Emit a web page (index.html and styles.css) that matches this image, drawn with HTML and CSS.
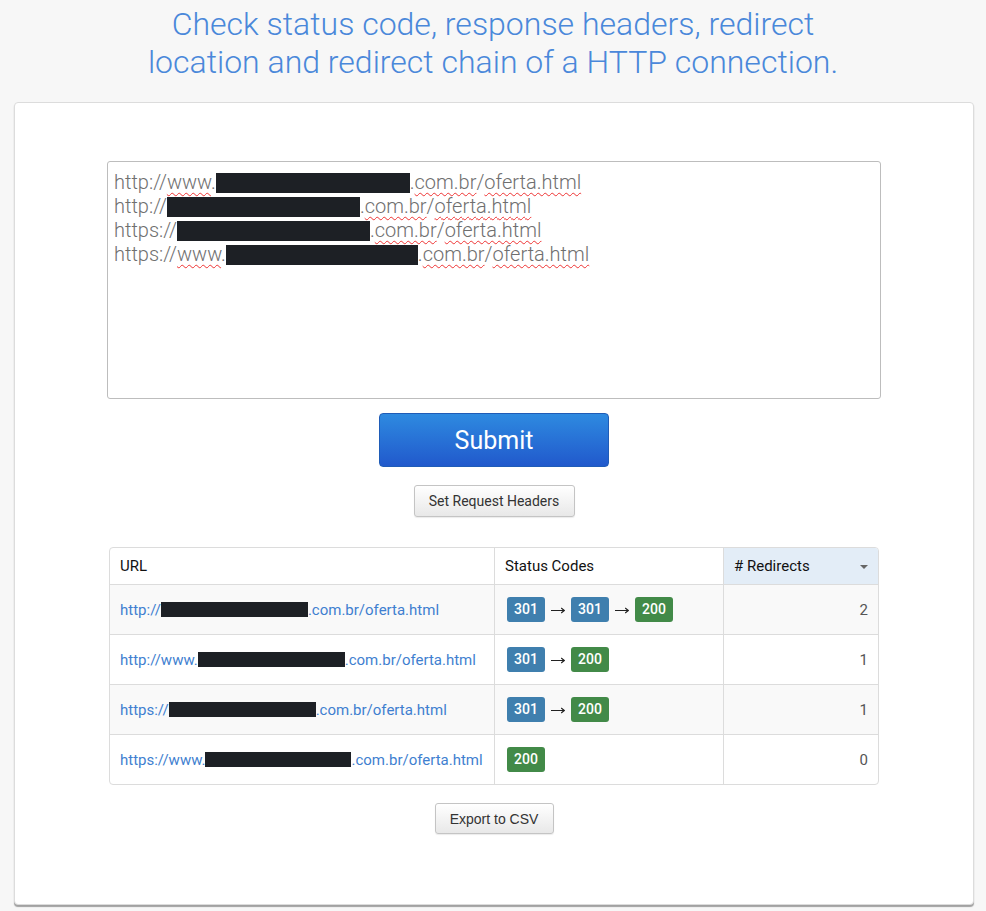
FILE: index.html
```html
<!DOCTYPE html>
<html lang="en">
<head>
<meta charset="utf-8">
<title>HTTP Status Checker</title>
<link rel="stylesheet" href="styles.css">
</head>
<body>
<h1 class="title">Check status code, response headers, redirect<br>location and redirect chain of a HTTP connection.</h1>
<main class="card">
  <div class="urls">
    <div class="url-line">http://<span class="sp">www</span>.<span class="redact" style="width:194px"></span>.<span class="sp">com.br</span>/<span class="sp">oferta.html</span></div>
    <div class="url-line">http://<span class="redact" style="width:193px"></span>.<span class="sp">com.br</span>/<span class="sp">oferta.html</span></div>
    <div class="url-line">https://<span class="redact" style="width:193px"></span>.<span class="sp">com.br</span>/<span class="sp">oferta.html</span></div>
    <div class="url-line">https://<span class="sp">www</span>.<span class="redact" style="width:192px"></span>.<span class="sp">com.br</span>/<span class="sp">oferta.html</span></div>
  </div>
  <button class="submit" type="button">Submit</button>
  <button class="btn-default btn-headers" type="button">Set Request Headers</button>
  <div class="table-wrap">
    <table class="results">
      <thead>
        <tr>
          <th class="col-url">URL</th>
          <th class="col-codes">Status Codes</th>
          <th class="col-redir sorted"># Redirects<span class="caret"></span></th>
        </tr>
      </thead>
      <tbody>
        <tr class="odd">
          <td><a href="#">http://<span class="redact-sm" style="width:147px"></span>.com.br/oferta.html</a></td>
          <td class="codes"><span class="badge b3">301</span><span class="arrow"><svg width="14" height="8" viewBox="0 0 14 8"><path d="M0 4.5H13.2M10.2 2L13.3 4.5L10.2 7"/></svg></span><span class="badge b3">301</span><span class="arrow"><svg width="14" height="8" viewBox="0 0 14 8"><path d="M0 4.5H13.2M10.2 2L13.3 4.5L10.2 7"/></svg></span><span class="badge b2">200</span></td>
          <td class="num">2</td>
        </tr>
        <tr>
          <td><a href="#">http://www.<span class="redact-sm" style="width:147px"></span>.com.br/oferta.html</a></td>
          <td class="codes"><span class="badge b3">301</span><span class="arrow"><svg width="14" height="8" viewBox="0 0 14 8"><path d="M0 4.5H13.2M10.2 2L13.3 4.5L10.2 7"/></svg></span><span class="badge b2">200</span></td>
          <td class="num">1</td>
        </tr>
        <tr class="odd">
          <td><a href="#">https://<span class="redact-sm" style="width:147px"></span>.com.br/oferta.html</a></td>
          <td class="codes"><span class="badge b3">301</span><span class="arrow"><svg width="14" height="8" viewBox="0 0 14 8"><path d="M0 4.5H13.2M10.2 2L13.3 4.5L10.2 7"/></svg></span><span class="badge b2">200</span></td>
          <td class="num">1</td>
        </tr>
        <tr>
          <td><a href="#">https://www.<span class="redact-sm" style="width:146px"></span>.com.br/oferta.html</a></td>
          <td class="codes"><span class="badge b2">200</span></td>
          <td class="num">0</td>
        </tr>
      </tbody>
    </table>
  </div>
  <button class="btn-default btn-export" type="button">Export to CSV</button>
</main>
</body>
</html>
```
FILE: styles.css
```css
html, body {
  margin: 0;
  padding: 0;
}
body {
  background: #f7f7f7;
  font-family: Roboto, "Noto Sans", Arial, sans-serif;
  color: #333;
  width: 986px;
  height: 911px;
  overflow: hidden;
}
.title {
  margin: 0;
  padding-top: 5px;
  text-align: center;
  font-weight: 300;
  font-size: 32px;
  line-height: 38px;
  color: #4a88da;
}
.card {
  margin: 21px 0 0 14px;
  width: 960px;
  height: 803px;
  background: #fff;
  border: 1px solid #dcdcdc;
  border-radius: 4px;
  box-shadow: 0 2px 1px rgba(0, 0, 0, 0.35);
  display: flex;
  flex-direction: column;
  align-items: center;
  padding-top: 58px;
  box-sizing: border-box;
}
.urls {
  width: 774px;
  height: 238px;
  box-sizing: border-box;
  border: 1px solid #bdbdbd;
  border-radius: 3px;
  padding: 8px 6px;
  font-size: 20px;
  font-weight: 300;
  line-height: 24px;
  color: #6f6f6f;
  white-space: nowrap;
}
.sp {
  text-decoration: underline wavy #e33;
  text-decoration-thickness: 1px;
  text-underline-offset: 3px;
}
.redact {
  display: inline-block;
  height: 20px;
  background: #1d2025;
  vertical-align: -4px;
}
.redact-sm {
  display: inline-block;
  height: 15px;
  background: #1d2025;
  vertical-align: -2px;
}
.submit {
  margin-top: 14px;
  width: 230px;
  height: 54px;
  border: 1px solid #1f5cb7;
  border-radius: 4px;
  background: linear-gradient(#2e8ae0, #2159cc);
  color: #fff;
  font-family: Roboto, Arial, sans-serif;
  font-size: 25px;
  font-weight: 400;
  padding: 0;
}
.btn-default {
  border: 1px solid #c4c4c4;
  border-radius: 3px;
  background: linear-gradient(#ffffff, #e8e8e8);
  color: #333;
  font-family: Roboto, Arial, sans-serif;
  font-size: 14px;
  padding: 0;
  box-shadow: 0 1px 1px rgba(0, 0, 0, 0.08);
}
.btn-headers {
  margin-top: 18px;
  width: 161px;
  height: 32px;
}
.btn-export {
  margin-top: 18px;
  width: 119px;
  height: 31px;
  font-family: "Liberation Sans", Arial, sans-serif;
}
.table-wrap {
  margin-top: 30px;
  width: 768px;
  border: 1px solid #dcdcdc;
  border-radius: 4px;
  overflow: hidden;
}
.results {
  width: 100%;
  border-collapse: collapse;
  font-size: 15px;
}
.results th {
  height: 36px;
  padding: 0 10px;
  text-align: left;
  font-weight: 400;
  color: #111;
  border-bottom: 1px solid #dcdcdc;
  border-right: 1px solid #dcdcdc;
  position: relative;
}
.results th:last-child,
.results td:last-child {
  border-right: 0;
}
.col-url { width: 364px; }
.col-codes { width: 208px; }
.results th.sorted {
  background: #e3edf7;
}
.caret {
  position: absolute;
  right: 10px;
  top: 17px;
  width: 0;
  height: 0;
  border-left: 4px solid transparent;
  border-right: 4px solid transparent;
  border-top: 4px solid #666;
}
.results td {
  height: 49px;
  padding: 0 10px;
  border-bottom: 1px solid #dcdcdc;
  border-right: 1px solid #dcdcdc;
  white-space: nowrap;
}
.results tbody tr:last-child td {
  border-bottom: 0;
}
.results tr.odd td {
  background: #f9f9f9;
}
.results a {
  color: #3f7fd0;
  text-decoration: none;
}
.codes {
  padding-left: 12px !important;
}
.badge {
  display: inline-block;
  width: 38px;
  height: 25px;
  line-height: 25px;
  text-align: center;
  border-radius: 3px;
  color: #fff;
  font-size: 14px;
  font-weight: 500;
  vertical-align: middle;
}
.b3 { background: #3f7fae; }
.b2 { background: #428a48; }
.arrow {
  display: inline-flex;
  width: 26px;
  height: 25px;
  align-items: center;
  justify-content: center;
  vertical-align: middle;
}
.arrow svg {
  display: block;
  fill: none;
  stroke: #222;
  stroke-width: 1.1;
}
.num {
  text-align: right;
  color: #555;
}
```
